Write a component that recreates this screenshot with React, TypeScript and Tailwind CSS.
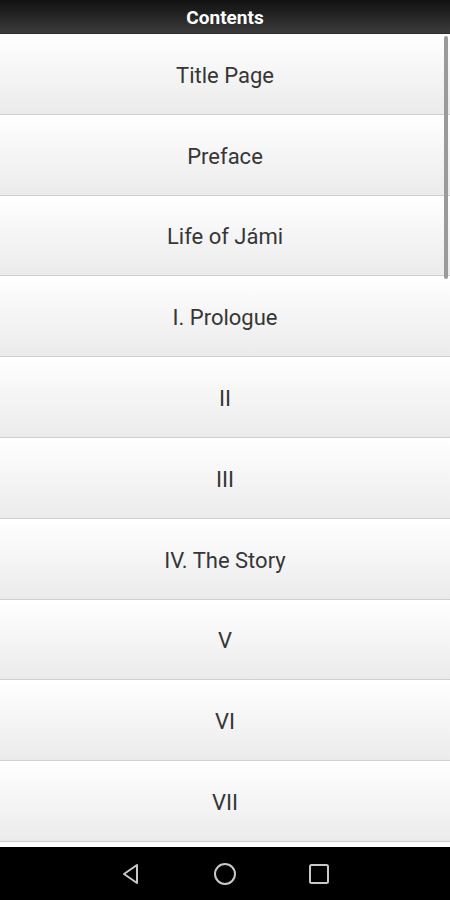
import React from "react";

const items = [
  "Title Page",
  "Preface",
  "Life of Jámi",
  "I. Prologue",
  "II",
  "III",
  "IV. The Story",
  "V",
  "VI",
  "VII",
];

export default function App() {
  return (
    <div
      className="relative w-[450px] h-[900px] flex flex-col bg-white overflow-hidden"
      style={{ fontFamily: "Roboto, 'Liberation Sans', sans-serif" }}
    >
      <div className="h-[34px] shrink-0 flex items-center justify-center pt-[2px] bg-gradient-to-b from-[#111111] to-[#3c3c3c] border-b border-[#2a2a2a]">
        <span className="text-white font-bold text-[19px] leading-none">Contents</span>
      </div>
      <div className="flex-1 flex flex-col">
        {items.map((t) => (
          <div
            key={t}
            className="h-[80.8px] shrink-0 flex items-center justify-center pt-[3px] bg-gradient-to-b from-[#ffffff] to-[#ebebeb] border-b border-[#cfcfcf]"
          >
            <span className="text-[22px] text-[#363636] font-normal">{t}</span>
          </div>
        ))}
      </div>
      <div className="absolute right-[2px] top-[36px] w-[4px] h-[243px] rounded-full bg-[#9a9a9a]" />
      <div className="h-[53px] shrink-0 bg-black flex items-center justify-center gap-[70px]">
        <svg width="24" height="24" viewBox="0 0 24 24" fill="none" stroke="#c8c8c8" strokeWidth="2" strokeLinejoin="round">
          <path d="M18 3 L5 12 L18 21 Z" />
        </svg>
        <svg width="24" height="24" viewBox="0 0 24 24" fill="none" stroke="#c8c8c8" strokeWidth="2">
          <circle cx="12" cy="12" r="10" />
        </svg>
        <svg width="24" height="24" viewBox="0 0 24 24" fill="none" stroke="#c8c8c8" strokeWidth="2">
          <rect x="3" y="3" width="18" height="18" rx="1.5" />
        </svg>
      </div>
    </div>
  );
}
